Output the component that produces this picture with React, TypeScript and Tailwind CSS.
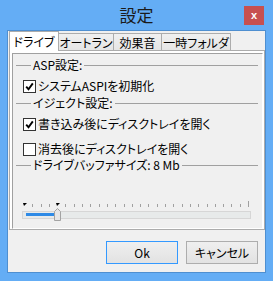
import React from 'react';

const FONT = {
  fontFamily: '"Noto Sans CJK JP", "Liberation Sans", sans-serif',
  fontFeatureSettings: '"palt"',
};

function Separator({ label }: { label: string }) {
  return (
    <div className="flex items-center h-[14px]">
      <div className="w-[15px] h-px bg-[#a0a0a0]" />
      <span className="mx-[2px] text-[12px] leading-[14px] text-black whitespace-nowrap">{label}</span>
      <div className="flex-1 h-px bg-[#a0a0a0]" />
    </div>
  );
}

function CheckRow({ label, checked }: { label: string; checked: boolean }) {
  return (
    <div className="flex items-center h-[16px] pl-[7px] gap-[2px]">
      <span className="w-[13px] h-[13px] border border-[#333333] bg-white flex items-center justify-center">
        {checked && (
          <svg width="9" height="9" viewBox="0 0 9 9">
            <path d="M1.2 4.6 L3.5 7.2 L7.8 1.4" fill="none" stroke="#000" strokeWidth="1.9" />
          </svg>
        )}
      </span>
      <span className="text-[12px] leading-[14px] text-black whitespace-nowrap">{label}</span>
    </div>
  );
}

function Ticks() {
  const step = 224 / 27;
  const ticks = Array.from({ length: 28 }, (_, i) => 2 + Math.round(i * step));
  return (
    <svg width="229" height="8" viewBox="0 0 229 8">
      {ticks.map((x, i) => {
        if (i === 0 || i === 4) {
          return <path key={i} d={`M${x - 1} 3 h4 l-3 3 z`} fill="#000" />;
        }
        if (i === 27) {
          return <rect key={i} x={x} y={1} width={1} height={6} fill="#a0a0a0" />;
        }
        return <rect key={i} x={x} y={4} width={1} height={3} fill="#a0a0a0" />;
      })}
    </svg>
  );
}

function Slider() {
  return (
    <div className="ml-[6px] mt-[28px] w-[229px]">
      <Ticks />
      <div className="relative mt-[3px] h-[8px] border border-[#d6d6d6] bg-[#e7eaea]">
        <div className="absolute left-[3px] top-[1px] w-[28px] h-[3px] bg-[#2e8ae6]" />
        <svg className="absolute left-[31px] top-[-4px]" width="8" height="13" viewBox="0 0 8 13">
          <path d="M0.5 3.5 L3.5 0.5 L6.5 3.5 L6.5 12.5 L0.5 12.5 Z" fill="#e6e6e6" stroke="#a3a3a3" />
        </svg>
      </div>
    </div>
  );
}

export default function App() {
  const tabs = ['オートラン', '効果音', '一時フォルダ'];
  const tabWidths = ['w-[56px]', 'w-[49px]', 'w-[70px]'];

  return (
    <div className="w-[273px] h-[281px] bg-[#64adf5] flex flex-col select-none" style={FONT}>
      {/* Title bar */}
      <div className="relative h-[30px] flex items-center justify-center">
        <span className="text-[17px] leading-[20px] text-[#1b1b1b]">設定</span>
        <div className="absolute right-[9px] top-[6px] w-[20px] h-[19px] bg-[#c75050] flex items-center justify-center">
          <span className="text-white text-[11px] font-bold leading-none" style={{ fontFamily: '"Liberation Sans", sans-serif' }}>x</span>
        </div>
      </div>

      {/* Client area */}
      <div className="flex-1 mx-[7px] mb-[8px] border border-[#4f8fd0] bg-[#f0f0f0] flex flex-col">
        {/* Tabs */}
        <div className="flex items-end h-[19px] pl-[1px]">
          <div className="relative z-10 w-[50px] h-[20px] -mb-px bg-white border border-b-0 border-[#acacac] flex items-center justify-center text-[12px] text-black whitespace-nowrap">
            ドライブ
          </div>
          {tabs.map((t, i) => (
            <div
              key={t}
              className={`${tabWidths[i]} h-[17px] -ml-px bg-gradient-to-b from-[#f0f0f0] to-[#e5e5e5] border border-b-0 border-[#acacac] flex items-center justify-center text-[12px] leading-[15px] text-black whitespace-nowrap`}
            >
              {t}
            </div>
          ))}
        </div>

        {/* Tab panel */}
        <div className="ml-[1px] w-[256px] h-[180px] border border-[#acacac] bg-white pl-[2px] pt-[2px] pr-[1px] flex">
          <div className="flex-1 border border-t-[#a0a0a0] border-l-[#a0a0a0] border-b-white border-r-white bg-[#f0f0f0] pl-[3px] pr-[4px] flex flex-col">
            <div className="mt-[4px]">
              <Separator label="ASP設定:" />
            </div>
            <div className="mt-[6px]">
              <CheckRow label="システムASPIを初期化" checked />
            </div>
            <div className="mt-[2px]">
              <Separator label="イジェクト設定:" />
            </div>
            <div className="mt-[6px]">
              <CheckRow label="書き込み後にディスクトレイを開く" checked />
            </div>
            <div className="mt-[9px]">
              <CheckRow label="消去後にディスクトレイを開く" checked={false} />
            </div>
            <div className="mt-[1px]">
              <Separator label="ドライブバッファサイズ: 8 Mb" />
            </div>
            <Slider />
          </div>
        </div>

        {/* Buttons */}
        <div className="mt-[11px] flex justify-end gap-[8px] pr-[7px]">
          <button className="w-[72px] h-[23px] border border-[#3399ff] bg-gradient-to-b from-[#efefef] to-[#e2e2e2] text-[12px] text-black">
            Ok
          </button>
          <button className="w-[72px] h-[23px] border border-[#adadad] bg-gradient-to-b from-[#efefef] to-[#e2e2e2] text-[12px] text-black">
            キャンセル
          </button>
        </div>
      </div>
    </div>
  );
}
